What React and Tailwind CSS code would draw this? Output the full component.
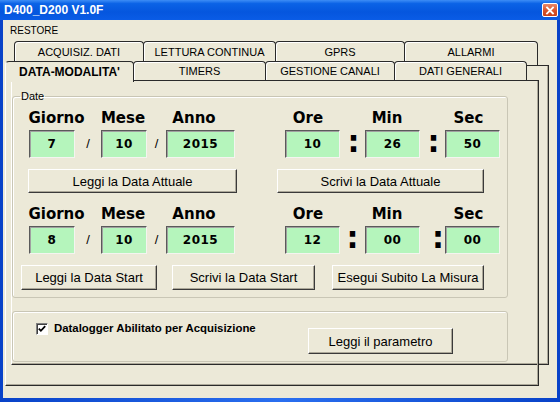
import React from "react";

function Btn({ className, children }) {
  return (
    <div
      className={
        "flex items-center justify-center bg-[#ece9d8] border border-t-white border-l-white border-r-[#3a3a3a] border-b-[#3a3a3a] shadow-[inset_-1px_-1px_0_#aca899] text-[13px] leading-none text-black whitespace-nowrap " +
        className
      }
    >
      {children}
    </div>
  );
}

function GreenBox({ className, children }) {
  return (
    <div
      className={
        "h-[28px] flex items-center justify-center bg-[#b5f5bc] border border-t-[#5a5a5a] border-l-[#5a5a5a] border-r-[#f4f4f0] border-b-[#f4f4f0] shadow-[inset_1px_1px_0_#a0a0a0] font-['DejaVu_Sans',Verdana,sans-serif] text-[12px] font-bold tracking-[0.5px] text-black " +
        className
      }
    >
      {children}
    </div>
  );
}

function Slash({ className }) {
  return (
    <div className={"flex justify-center text-[13px] text-black " + className}>/</div>
  );
}

function Colon({ className }) {
  return (
    <div className={"flex h-[28px] items-center font-['DejaVu_Sans',Verdana,sans-serif] text-[30px] font-bold leading-none text-black " + className}>
      <span className="mb-[5px]">:</span>
    </div>
  );
}

function LabelsRow() {
  return (
    <div className="flex h-[20px] font-['DejaVu_Sans',Verdana,sans-serif] text-[15px] font-bold leading-[20px] text-black">
      <div className="ml-[15px] w-[57px] flex justify-center whitespace-nowrap">Giorno</div>
      <div className="ml-[15px] w-[46px] flex justify-center whitespace-nowrap">Mese</div>
      <div className="ml-[26px] w-[44px] flex justify-center whitespace-nowrap">Anno</div>
      <div className="ml-[77px] w-[30px] flex justify-center whitespace-nowrap">Ore</div>
      <div className="ml-[49px] w-[30px] flex justify-center whitespace-nowrap">Min</div>
      <div className="ml-[50px] w-[33px] flex justify-center whitespace-nowrap">Sec</div>
    </div>
  );
}

export default function App() {
  return (
    <div className="w-[560px] h-[402px] flex flex-col bg-[linear-gradient(90deg,#0842c8_0%,#2a6ff0_50%,#0842c8_100%)] font-['Liberation_Sans',Arial,sans-serif] overflow-hidden select-none">
      {/* Title bar */}
      <div className="h-[20px] shrink-0 flex items-center pl-[4px] pr-[2px] bg-[linear-gradient(180deg,#3d8df6_0%,#0b63e6_18%,#0556de_60%,#0a5ce6_100%)]">
        <span className="text-[12px] font-bold text-white leading-none">D400_D200 V1.0F</span>
        <div className="ml-auto w-[16px] h-[14px] rounded-[2px] border border-white bg-[linear-gradient(180deg,#e9886a_0%,#d9532b_55%,#c8421c_100%)] flex items-center justify-center">
          <svg width="10" height="9" viewBox="0 0 10 9">
            <path d="M2 1.5 L8 7.5 M8 1.5 L2 7.5" stroke="#fff" strokeWidth="1.8" strokeLinecap="square" />
          </svg>
        </div>
      </div>

      {/* Body */}
      <div className="flex-1 ml-[3px] mr-[3px] mb-[4px] bg-[#ece9d8] flex flex-col text-black">
        {/* Menu */}
        <div className="h-[21px] shrink-0 flex items-center pl-[7px] text-[10px] leading-none">RESTORE</div>

        {/* Tab control */}
        <div className="flex-1 grid">
          {/* back panel */}
          <div className="col-start-1 row-start-1 self-start justify-self-start ml-[8px] mt-[24px] w-[538px] h-[300px] border border-t-[#2a2a2a] border-l-white border-r-[#2a2a2a] border-b-[#2a2a2a] shadow-[inset_-1px_-1px_0_#aca899]" />

          {/* row 1 tabs */}
          <div className="col-start-1 row-start-1 self-start justify-self-start ml-[11px] flex text-[11px] leading-[14px]">
            <div className="w-[130px] h-[24px] border border-b-0 border-[#2a2a2a] rounded-t-[4px] bg-[#ece9d8] shadow-[inset_1px_1px_0_#fff] text-center pt-[3px]">ACQUISIZ. DATI</div>
            <div className="-ml-px w-[133px] h-[24px] border border-b-0 border-[#2a2a2a] rounded-t-[4px] bg-[#ece9d8] shadow-[inset_1px_1px_0_#fff] text-center pt-[3px]">LETTURA CONTINUA</div>
            <div className="-ml-px w-[130px] h-[24px] border border-b-0 border-[#2a2a2a] rounded-t-[4px] bg-[#ece9d8] shadow-[inset_1px_1px_0_#fff] text-center pt-[3px]">GPRS</div>
            <div className="-ml-px w-[134px] h-[24px] border border-b-0 border-[#2a2a2a] rounded-t-[4px] bg-[#ece9d8] shadow-[inset_1px_1px_0_#fff] text-center pt-[3px]">ALLARMI</div>
          </div>

          {/* front panel */}
          <div className="col-start-1 row-start-1 self-start justify-self-start ml-[2px] mt-[39px] w-[534px] h-[306px] border border-t-[#2a2a2a] border-l-white border-r-[#2a2a2a] border-b-[#2a2a2a] shadow-[inset_-1px_-1px_0_#aca899] flex flex-col">
            <fieldset className="ml-[6px] mt-[9px] w-[496px] h-[208px] border border-[#c9c6b5] rounded-[3px] shadow-[inset_1px_1px_0_#fff]">
              <legend className="ml-[7px] px-[1px] text-[11px] leading-[13px]">Date</legend>
              <div className="pt-[5px] flex flex-col">
                <LabelsRow />
                <div className="mt-[2px] flex items-center">
                  <GreenBox className="ml-[16px] w-[46px]">7</GreenBox>
                  <Slash className="w-[26px]" />
                  <GreenBox className="w-[46px]">10</GreenBox>
                  <Slash className="w-[19px]" />
                  <GreenBox className="w-[69px]">2015</GreenBox>
                  <GreenBox className="ml-[50px] w-[55px]">10</GreenBox>
                  <Colon className="w-[25px] justify-center pl-[2px]" />
                  <GreenBox className="w-[55px]">26</GreenBox>
                  <Colon className="w-[25px] justify-center pl-[2px]" />
                  <GreenBox className="w-[55px]">50</GreenBox>
                </div>
                <div className="mt-[11px] flex">
                  <Btn className="ml-[15px] w-[209px] h-[24px]">Leggi la Data Attuale</Btn>
                  <Btn className="ml-[40px] w-[207px] h-[24px]">Scrivi la Data Attuale</Btn>
                </div>
                <div className="mt-[11px]">
                  <LabelsRow />
                </div>
                <div className="mt-[2px] flex items-center">
                  <GreenBox className="ml-[16px] w-[46px]">8</GreenBox>
                  <Slash className="w-[26px]" />
                  <GreenBox className="w-[46px]">10</GreenBox>
                  <Slash className="w-[19px]" />
                  <GreenBox className="w-[69px]">2015</GreenBox>
                  <GreenBox className="ml-[50px] w-[55px]">12</GreenBox>
                  <Colon className="w-[25px] justify-center" />
                  <GreenBox className="w-[55px]">00</GreenBox>
                  <Colon className="w-[25px] justify-end pr-[1px]" />
                  <GreenBox className="w-[55px]">00</GreenBox>
                </div>
                <div className="mt-[11px] flex">
                  <Btn className="ml-[8px] w-[136px] h-[25px]">Leggi la Data Start</Btn>
                  <Btn className="ml-[15px] w-[143px] h-[25px]">Scrivi la Data Start</Btn>
                  <Btn className="ml-[17px] w-[152px] h-[25px]">Esegui Subito La Misura</Btn>
                </div>
              </div>
            </fieldset>

            <fieldset className="ml-[6px] mt-[13px] w-[496px] h-[51px] border border-[#c9c6b5] rounded-[3px] shadow-[inset_1px_1px_0_#fff] flex items-start">
              <div className="ml-[23px] mt-[11px] w-[272px] h-[12px] flex items-center gap-[6px]">
                <div className="w-[12px] h-[12px] shrink-0 bg-white border border-t-[#808080] border-l-[#808080] border-r-white border-b-white shadow-[inset_1px_1px_0_#404040] flex items-center justify-center">
                  <svg width="8" height="8" viewBox="0 0 8 8">
                    <path d="M0.8 3.6 L2.9 5.8 L7.2 1.2" stroke="#000" strokeWidth="1.8" fill="none" />
                  </svg>
                </div>
                <span className="text-[11.4px] font-bold leading-none whitespace-nowrap">Datalogger Abilitato per Acquisizione</span>
              </div>
              <Btn className="mt-[16px] w-[145px] h-[26px]">Leggi il parametro</Btn>
            </fieldset>
          </div>

          {/* row 2 tabs */}
          <div className="col-start-1 row-start-1 self-start justify-self-start ml-[2px] mt-[20px] flex text-[11px] leading-[14px]">
            <div className="w-[129px] h-[21px] border border-b-0 border-t-[#2a2a2a] border-r-[#2a2a2a] border-l-white rounded-t-[4px] bg-[#ece9d8] text-center pt-[3px] font-bold text-[12px]">DATA-MODALITA'</div>
            <div className="-ml-px w-[133px] h-[19px] border border-b-0 border-[#2a2a2a] rounded-t-[4px] bg-[#ece9d8] shadow-[inset_1px_1px_0_#fff] text-center pt-[2px]">TIMERS</div>
            <div className="-ml-px w-[130px] h-[19px] border border-b-0 border-[#2a2a2a] rounded-t-[4px] bg-[#ece9d8] shadow-[inset_1px_1px_0_#fff] text-center pt-[2px]">GESTIONE CANALI</div>
            <div className="-ml-px w-[133px] h-[19px] border border-b-0 border-[#2a2a2a] rounded-t-[4px] bg-[#ece9d8] shadow-[inset_1px_1px_0_#fff] text-center pt-[2px]">DATI GENERALI</div>
          </div>
        </div>
      </div>
    </div>
  );
}
